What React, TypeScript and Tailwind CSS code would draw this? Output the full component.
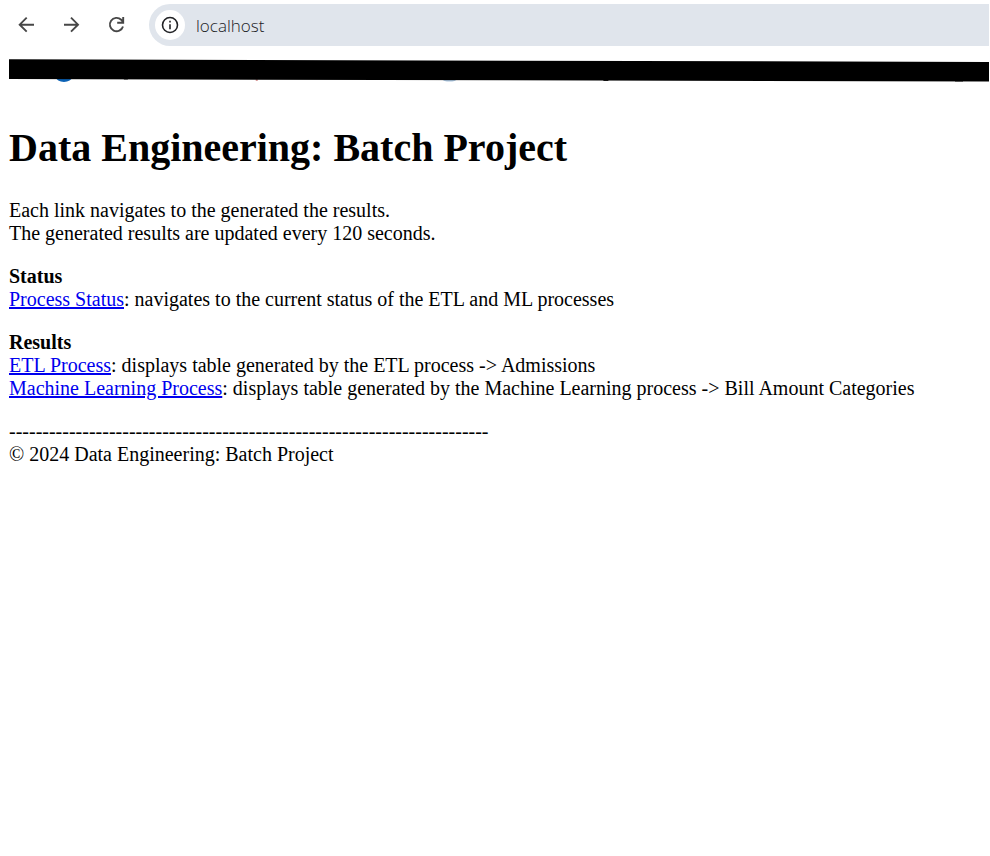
const iconProps = {
  viewBox: "0 0 24 24",
  fill: "none",
  stroke: "currentColor",
  strokeWidth: 1.9,
  "aria-hidden": true,
} as const;

function BrowserBar() {
  return (
    <header className="flex h-[46px] items-center pt-1 pr-px text-[#474747]">
      <nav aria-label="Browser" className="flex items-center gap-[21px] pl-[15px]">
        <button type="button" aria-label="Back" className="size-6">
          <svg {...iconProps} className="size-6">
            <path d="M19 11.7H5M11.700 4.700l-7 7 7 7" />
          </svg>
        </button>
        <button type="button" aria-label="Forward" className="size-6">
          <svg {...iconProps} className="size-6">
            <path d="M4 11.700h14M11 4.700l7 7-7 7" />
          </svg>
        </button>
        <button type="button" aria-label="Reload" className="size-6">
          <svg {...iconProps} className="size-6">
            <path d="M18 13.500A6.700 6.700 0 1 1 16.200 6.700l1.900 2.400M18.200 4v5.800h-6" />
          </svg>
        </button>
      </nav>
      <div className="ml-5 flex h-[42px] min-w-0 flex-1 items-center rounded-l-full bg-[#e0e5ec] pl-[6px]">
        <button
          type="button"
          aria-label="Site information"
          className="flex size-[30px] shrink-0 items-center justify-center rounded-full bg-white text-[#202124]"
        >
          <svg {...iconProps} className="size-5">
            <circle cx="12" cy="12" r="9" />
            <path d="M12 11v6M12 7v2" />
          </svg>
        </button>
        <input
          type="text"
          aria-label="Address"
          defaultValue="localhost"
          className="ml-[11px] min-w-0 flex-1 bg-transparent pt-0.5 font-['Open_Sans',sans-serif] text-[17px] font-light text-[#202124] outline-none"
        />
      </div>
    </header>
  );
}

function BookmarksStrip() {
  return (
    <svg
      viewBox="0 0 981 25"
      preserveAspectRatio="none"
      aria-hidden="true"
      className="mt-[13px] ml-[9px] block h-[25px] w-[calc(100%-10px)]"
    >
      <ellipse cx="55" cy="18" rx="8" ry="5" fill="#0b62b5" />
      <ellipse cx="441" cy="20.500" rx="7" ry="2" fill="#a9c4de" />
      <path d="M247 20h2v2h-2z" fill="#d99a9a" />
      <path d="M115 19h4v1.500h-4zM595 21h5v1h-5zM947 21h8v1.500h-8z" fill="#222" />
      <path d="M0 0.200L981 3V22.500L0 20z" fill="#000" />
    </svg>
  );
}

export default function App() {
  return (
    <div className="min-h-screen bg-white text-black">
      <BrowserBar />
      <BookmarksStrip />
      <main className="px-[9px] pt-[41px] font-['Liberation_Serif',serif] text-[20px] leading-[23px]">
        <h1 className="text-[40px] leading-[46px] font-bold">Data Engineering: Batch Project</h1>
        <p className="mt-7">
          Each link navigates to the generated the results.
          <br />
          The generated results are updated every 120 seconds.
        </p>
        <section className="mt-5">
          <h2 className="font-bold">Status</h2>
          <p>
            <a href="#status" className="text-[#0000ee] underline">Process Status</a>: navigates to
            the current status of the ETL and ML processes
          </p>
        </section>
        <section className="mt-5">
          <h2 className="font-bold">Results</h2>
          <p>
            <a href="#etl" className="text-[#0000ee] underline">ETL Process</a>: displays table
            generated by the ETL process -&gt; Admissions
          </p>
          <p>
            <a href="#ml" className="text-[#0000ee] underline">Machine Learning Process</a>: displays
            table generated by the Machine Learning process -&gt; Bill Amount Categories
          </p>
        </section>
        <footer className="mt-5">
          <p>------------------------------------------------------------------------</p>
          <p>© 2024 Data Engineering: Batch Project</p>
        </footer>
      </main>
    </div>
  );
}
